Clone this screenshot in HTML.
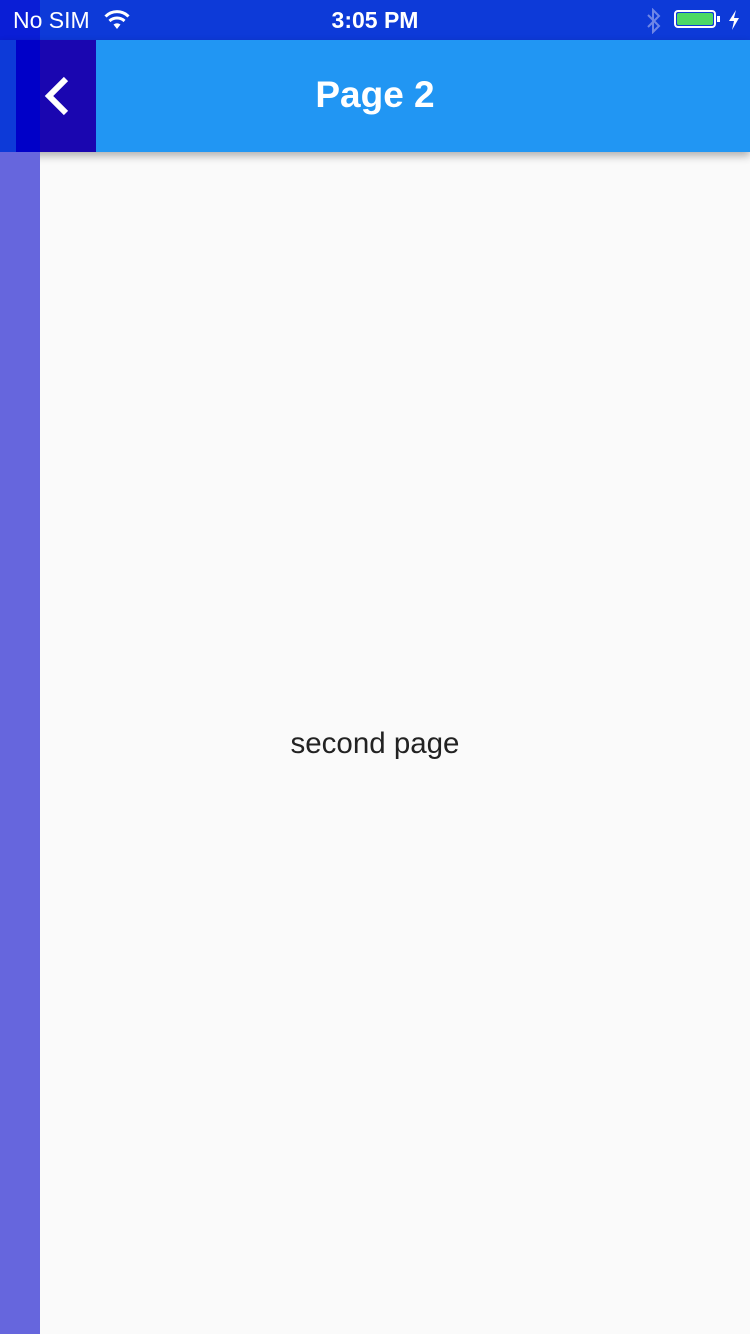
<!DOCTYPE html>
<html><head><style>
body{margin:0;width:750px;height:1334px;background:#fafafa;position:relative;overflow:hidden;font-family:"Liberation Sans",sans-serif}
div{position:absolute}
</style></head><body>
<div style="left:0;top:0;width:750px;height:40px;background:#0d3ad8"></div>
<div style="left:0;top:0;width:40px;height:40px;background:#0a1ed6"></div>
<div style="left:13px;top:7px;color:#fff;font-size:23px">No SIM</div>
<svg style="position:absolute;left:104px;top:9px" width="26" height="22" viewBox="0 0 26 22"><path d="M13 20 L16.5 15.5 A5.5 5.5 0 0 0 9.5 15.5Z" fill="#fff"/><path d="M5.5 12 A11 11 0 0 1 20.5 12" stroke="#fff" stroke-width="3" fill="none"/><path d="M1.5 7.5 A16 16 0 0 1 24.5 7.5" stroke="#fff" stroke-width="3" fill="none"/></svg>
<div style="left:0;top:7px;width:750px;text-align:center;color:#fff;font-size:23px;font-weight:bold">3:05 PM</div>
<svg style="position:absolute;left:645px;top:8px" width="18" height="26" viewBox="0 0 18 26"><path d="M3 7 L14 18 L8 24 V2 L14 8 L3 19" stroke="#6f86e6" stroke-width="2" fill="none"/></svg>
<div style="left:674px;top:10px;width:42px;height:18px;border:2px solid #fff;border-radius:4px;box-sizing:border-box"></div>
<div style="left:677px;top:13px;width:36px;height:12px;background:#4cd964;border-radius:2px"></div>
<div style="left:717px;top:16px;width:3px;height:6px;background:#fff"></div>
<svg style="position:absolute;left:727px;top:9px" width="14" height="22" viewBox="0 0 14 22"><path d="M9 1 L2 12 H7 L5 21 L12 9 H7Z" fill="#fff"/></svg>
<div style="left:0;top:40px;width:750px;height:112px;background:#2196f3;box-shadow:0 4px 8px rgba(0,0,0,.3)"></div>
<div style="left:0;top:40px;width:16px;height:112px;background:#0d3ad8"></div>
<div style="left:16px;top:40px;width:24px;height:112px;background:#0000c8"></div>
<div style="left:40px;top:40px;width:56px;height:112px;background:#1a06b0"></div>
<svg style="position:absolute;left:40px;top:74px" width="36" height="44" viewBox="0 0 36 44"><path d="M26 5 L9 22 L26 39" stroke="#fff" stroke-width="6" fill="none"/></svg>
<div style="left:0;top:74px;width:750px;text-align:center;color:#fff;font-size:37px;font-weight:bold">Page 2</div>
<div style="left:0;top:152px;width:40px;height:1182px;background:#6666dd"></div>
<div style="left:0;top:727px;width:750px;text-align:center;color:#222;font-size:29.5px">second page</div>
</body></html>
